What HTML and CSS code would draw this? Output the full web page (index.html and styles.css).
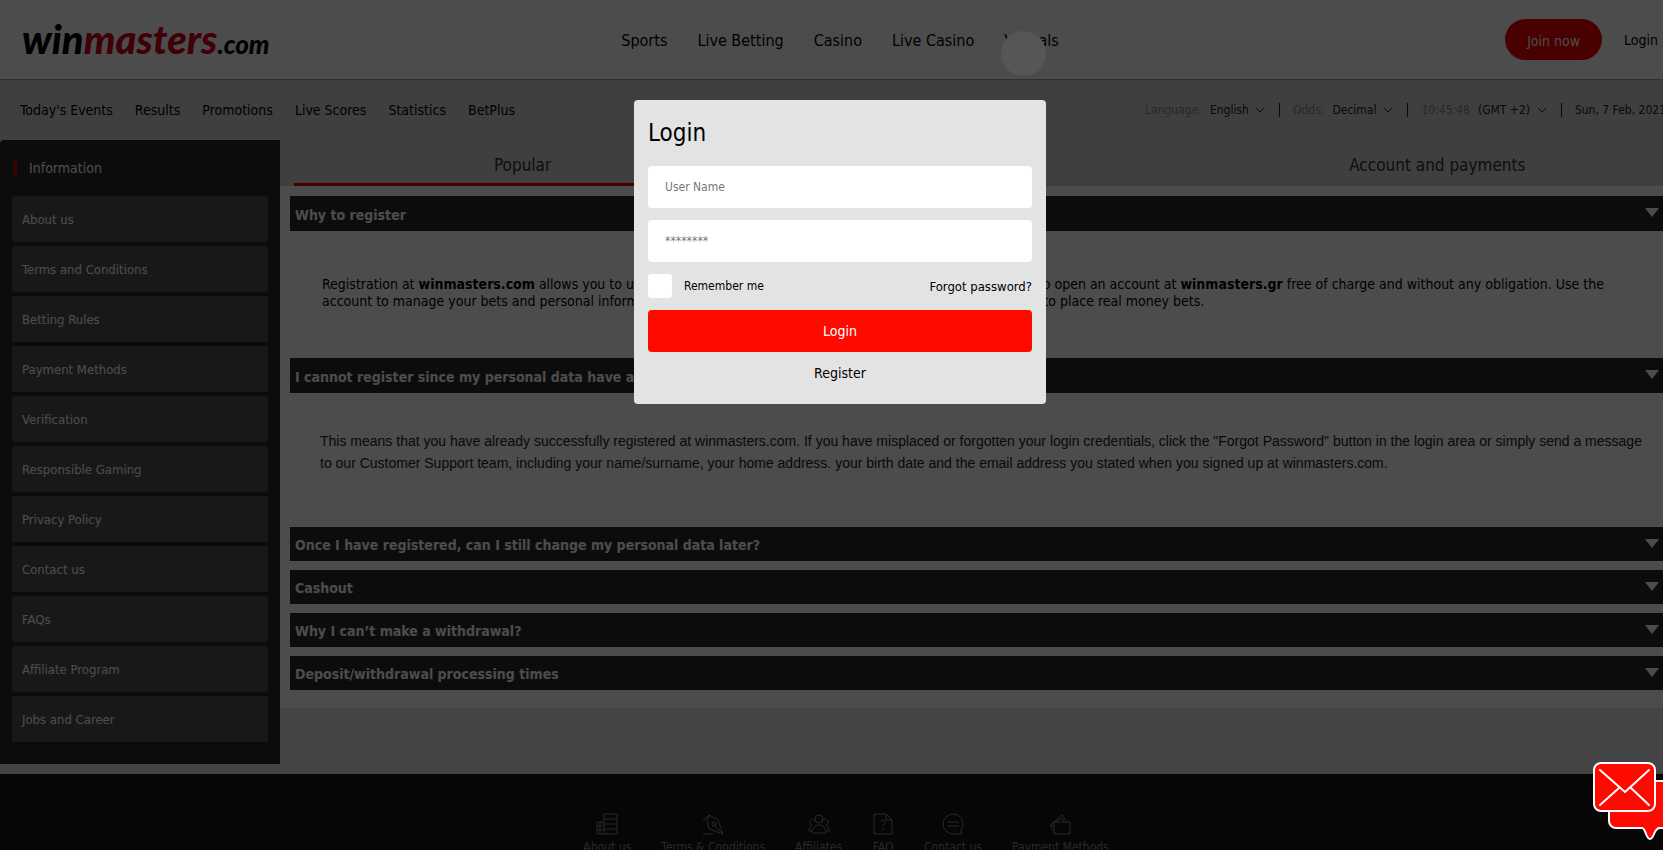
FILE: index.html
```html
<!DOCTYPE html>
<html lang="en">
<head>
  <meta charset="UTF-8" />
  <meta name="viewport" content="width=device-width, initial-scale=1" />
  <title>winmasters.com</title>
  <link rel="stylesheet" href="styles.css">
</head>
<body>
<div class="page">

  <!-- HEADER -->
  <header class="header">
    <a class="logo" href="#">win<span class="logo-red">masters</span><span class="logo-com">.com</span></a>
    <nav class="main-nav">
      <a href="#">Sports</a>
      <a href="#">Live Betting</a>
      <a href="#">Casino</a>
      <a href="#">Live Casino</a>
      <a href="#" class="virtuals">Virtuals<span class="bubble"></span></a>
    </nav>
    <div class="account">
      <button class="join-btn" type="button">Join now</button>
      <a href="#">Login</a>
    </div>
  </header>

  <!-- SUB NAVIGATION -->
  <div class="subnav">
    <nav class="sub-links">
      <a href="#">Today's Events</a>
      <a href="#">Results</a>
      <a href="#">Promotions</a>
      <a href="#">Live Scores</a>
      <a href="#">Statistics</a>
      <a href="#">BetPlus</a>
    </nav>
    <div class="settings">
      <div class="setting">
        <label for="language">Language:</label>
        <select id="language"><option>English</option></select>
        <svg class="chevron" viewBox="0 0 10 6"><path d="M1 1l4 4 4-4" /></svg>
      </div>
      <div class="setting">
        <label for="odds">Odds:</label>
        <select id="odds"><option>Decimal</option></select>
        <svg class="chevron" viewBox="0 0 10 6"><path d="M1 1l4 4 4-4" /></svg>
      </div>
      <div class="setting">
        <label for="zone">10:45:48</label>
        <select id="zone"><option>(GMT +2)</option></select>
        <svg class="chevron" viewBox="0 0 10 6"><path d="M1 1l4 4 4-4" /></svg>
      </div>
      <div class="setting">Sun, 7 Feb, 2021</div>
    </div>
  </div>

  <div class="content">
    <!-- SIDEBAR -->
    <aside class="sidebar">
      <h2>Information</h2>
      <ul>
        <li><a href="#">About us</a></li>
        <li><a href="#">Terms and Conditions</a></li>
        <li><a href="#">Betting Rules</a></li>
        <li><a href="#">Payment Methods</a></li>
        <li><a href="#">Verification</a></li>
        <li><a href="#">Responsible Gaming</a></li>
        <li><a href="#">Privacy Policy</a></li>
        <li><a href="#">Contact us</a></li>
        <li><a href="#">FAQs</a></li>
        <li><a href="#">Affiliate Program</a></li>
        <li><a href="#">Jobs and Career</a></li>
      </ul>
    </aside>

    <!-- FAQ -->
    <main class="main">
      <div class="tabs">
        <button class="tab active" type="button">Popular</button>
        <button class="tab" type="button">Account and payments</button>
      </div>
      <div class="faq">
        <button class="question" type="button">Why to register</button>
        <div class="answer">
          <p>Registration at <b>winmasters.com</b> allows you to use all of those services that we offer on our website. You may also open an account at <b>winmasters.gr</b> free of charge and without any obligation. Use the<br>account to manage your bets and personal information, to make the deposit with ease, to withdraw winnings and to place real money bets.</p>
        </div>
        <button class="question" type="button">I cannot register since my personal data have already been used</button>
        <div class="answer support">
          <p>This means that you have already successfully registered at winmasters.com. If you have misplaced or forgotten your login credentials, click the "Forgot Password" button in the login area or simply send a message to our Customer Support team, including your name/surname, your home address. your birth date and the email address you stated when you signed up at winmasters.com.</p>
        </div>
        <div class="questions">
          <button class="question" type="button">Once I have registered, can I still change my personal data later?</button>
          <button class="question" type="button">Cashout</button>
          <button class="question" type="button">Why I can’t make a withdrawal?</button>
          <button class="question" type="button">Deposit/withdrawal processing times</button>
        </div>
      </div>
    </main>
  </div>

  <!-- FOOTER -->
  <footer class="footer">
    <a href="#">
      <svg viewBox="0 0 22 22"><path d="M1 21V9h7M8 21V1h13v20zM1 21h7M8 6h13M8 11h13M8 16h13M1 13h7M1 17h7M4 9v12" /></svg>
      About us
    </a>
    <a href="#">
      <svg viewBox="0 0 22 22"><path d="M1 8l6-6 9 5 5 14L7 16 5 6M21 21l-9-9M1 21h10M7 2l-1 4" /><circle cx="12" cy="11" r="2" /></svg>
      Terms &amp; Conditions
    </a>
    <a href="#">
      <svg viewBox="0 0 22 22"><circle cx="11" cy="6" r="4" /><path d="M7 7a3 3 0 1 0-3 5M15 7a3 3 0 1 1 3 5M4 20c0-5 3-8 7-8s7 3 7 8zM4 12c-2 1-3 3-3 6h3M18 12c2 1 3 3 3 6h-3" /></svg>
      Affiliates
    </a>
    <a href="#">
      <svg viewBox="0 0 22 22"><path d="M2 1h12l6 6v14H2zM14 1v6h6M9 9c0-3 5-3 4 0 0 2-2 2-2 4M11 15v2" /></svg>
      FAQ
    </a>
    <a href="#">
      <svg viewBox="0 0 22 22"><path d="M21 11a10 10 0 1 0-10 10h9l-1-4a10 10 0 0 0 2-6zM5 9h12M5 13h12" /></svg>
      Contact us
    </a>
    <a href="#">
      <svg viewBox="0 0 22 22"><path d="M5 9h16v12H5zM5 18l-4-6L13 2l5 7M3 10l10-5 2 4M1 12l4 1" /></svg>
      Payment Methods
    </a>
  </footer>

  <!-- LOGIN POPUP -->
  <div class="overlay">
    <form class="login">
      <h1>Login</h1>
      <input class="field" type="text" placeholder="User Name" aria-label="User Name">
      <input class="field" type="password" placeholder="********" aria-label="Password">
      <div class="login-row">
        <label class="remember"><input type="checkbox"> Remember me</label>
        <a href="#">Forgot password?</a>
      </div>
      <button class="login-btn" type="button">Login</button>
      <a class="register" href="#">Register</a>
    </form>
  </div>

  <!-- CONTACT BUTTON -->
  <button class="contact-btn" type="button" aria-label="Contact">
    <svg viewBox="0 0 80 80">
      <path d="M25 20h46a7 7 0 0 1 7 7v33a7 7 0 0 1-7 7h-5q-3 1-5 6-2 5-4 5t-4-5q-2-6-4-6H23a7 7 0 0 1-7-7V28z" />
      <rect x="1" y="2" width="61" height="48" rx="7" />
      <path d="M7 9l25 22L56 9M7 44l19-17M56 44L38 27" />
    </svg>
  </button>
</div>
</body>
</html>
```
FILE: styles.css
```css
:root {
  --red: #ff0a00;
  --dark: #2b2b2b;
  --item: #525252;
  --bar: #d2d2d2;
  --popup: #e3e3e3;
}
* {
  box-sizing: border-box;
}
body {
  margin: 0;
  height: 100vh;
  overflow: hidden;
  font-family: "DejaVu Sans Condensed", "Noto Sans", sans-serif;
  font-size: 13px;
  color: #000;
}
a {
  color: inherit;
  text-decoration: none;
}
button, input, select {
  font: inherit;
  color: inherit;
  border: none;
  margin: 0;
}
button {
  cursor: pointer;
}
svg {
  display: block;
  fill: none;
}
.page {
  position: relative;
  min-width: 1680px;
  min-height: 100vh;
  overflow: hidden;
  background: #e3e3e3;
}

/* HEADER */
.header {
  display: grid;
  grid-template-columns: 1fr auto 1fr;
  align-items: center;
  height: 80px;
  padding: 0 22px;
  background: #fff;
  border-bottom: 1px solid #999;
}
.logo {
  padding-top: 4px;
  font-family: Lato, sans-serif;
  font-size: 40px;
  font-weight: 900;
  font-style: italic;
  line-height: 40px;
}
.logo-red {
  color: #d8001c;
}
.logo-com {
  font-size: 26px;
}
.main-nav {
  display: flex;
  gap: 30px;
  padding-top: 2px;
  font-size: 16px;
}
.virtuals {
  position: relative;
}
.bubble {
  position: absolute;
  z-index: 3;
  left: -3px;
  top: 0;
  width: 45px;
  height: 45px;
  border-radius: 50%;
  background: #545756;
}
.account {
  display: flex;
  justify-content: flex-end;
  align-items: center;
  gap: 22px;
  font-size: 14px;
}
.join-btn {
  height: 41px;
  padding: 2px 22px 0;
  border-radius: 21px;
  background: #f00000;
  color: #fff;
}

/* SUB NAVIGATION */
.subnav {
  display: flex;
  justify-content: space-between;
  align-items: center;
  height: 60px;
  padding: 0 14px 0 20px;
  background: var(--bar);
}
.sub-links {
  display: flex;
  gap: 22px;
  font-size: 14px;
}
.settings {
  display: flex;
  font-size: 12px;
  color: #222;
}
.setting {
  display: flex;
  align-items: center;
}
.setting + .setting {
  margin-left: 14px;
  padding-left: 13px;
  border-left: 1px solid #222;
}
.setting label {
  margin-right: 8px;
  color: #888;
}
.setting select {
  appearance: none;
  padding: 0;
  background: none;
}
.chevron {
  width: 10px;
  height: 6px;
  margin-left: 6px;
  stroke: #222;
}

/* SIDEBAR */
.content {
  display: flex;
  align-items: flex-start;
  padding-bottom: 10px;
}
.sidebar {
  flex: 0 0 280px;
  padding: 19px 12px 22px;
  border-radius: 4px 0 0;
  background: var(--dark);
  color: #fff;
}
.sidebar h2 {
  margin: 0 2px 19px;
  padding-left: 12px;
  border-left: 3px solid #d00000;
  font-size: 14px;
  font-weight: normal;
  line-height: 18px;
}
.sidebar ul {
  display: flex;
  flex-direction: column;
  gap: 4px;
  margin: 0;
  padding: 0;
  list-style: none;
}
.sidebar li a {
  display: block;
  padding: 2px 10px 0;
  border-radius: 3px;
  background: var(--item);
  line-height: 44px;
}

/* FAQ */
.main {
  flex: 1;
  background: #fff;
}
.tabs {
  display: flex;
  justify-content: space-between;
  padding: 0 14px;
  background: var(--bar);
}
.tab {
  flex: 0 0 33.33%;
  height: 46px;
  padding: 6px 0 0;
  border-bottom: 3px solid transparent;
  background: none;
  font-size: 17px;
  color: #333;
}
.tab.active {
  border-color: #e00000;
}
.faq {
  padding: 10px 0 18px 10px;
}
.question {
  display: flex;
  justify-content: space-between;
  align-items: center;
  width: 100%;
  height: 35px;
  padding: 2px 21px 0 5px;
  background: var(--dark);
  color: #fff;
  font-size: 14px;
  font-weight: bold;
  text-align: left;
}
.question::after {
  content: "";
  margin-bottom: 4px;
  border: 7px solid transparent;
  border-top: 9px solid #fff;
  border-bottom: 0;
}
.answer {
  min-height: 127px;
  padding: 45px 32px;
  font-size: 14px;
  line-height: 17px;
}
.answer p {
  margin: 0;
}
.support {
  min-height: 134px;
  padding: 37px 30px;
  font-family: "Liberation Sans", sans-serif;
  line-height: 22px;
  color: #222;
}
.questions {
  display: flex;
  flex-direction: column;
  gap: 9px;
}
.questions .question {
  height: 34px;
}

/* FOOTER */
.footer {
  display: flex;
  justify-content: center;
  gap: 30px;
  padding: 39px 0 60px 12px;
  background: #141414;
  color: #888;
  font-size: 12px;
}
.footer a {
  display: flex;
  flex-direction: column;
  align-items: center;
  gap: 5px;
}
.footer svg {
  width: 22px;
  height: 22px;
  stroke: #888;
}

/* LOGIN POPUP */
.overlay {
  position: absolute;
  inset: 0;
  z-index: 2;
  padding-top: 100px;
  background: rgba(0,0,0,0.7);
}
.login {
  display: flex;
  flex-direction: column;
  gap: 12px;
  width: 412px;
  margin: 0 auto;
  padding: 14px 14px 22px;
  border-radius: 4px;
  background: var(--popup);
}
.login h1 {
  margin: 0;
  padding-bottom: 2px;
  font-size: 24px;
  font-weight: normal;
  line-height: 38px;
}
.field {
  height: 42px;
  padding: 0 17px;
  border-radius: 4px;
  background: #fff;
  font-size: 12px;
}
.field::placeholder {
  color: #777;
}
.login-row, .remember {
  display: flex;
  align-items: center;
}
.login-row {
  justify-content: space-between;
}
.remember {
  gap: 12px;
  font-size: 12px;
}
.remember input {
  appearance: none;
  width: 24px;
  height: 24px;
  border-radius: 3px;
  background: #fff;
}
.login-btn {
  height: 42px;
  border-radius: 4px;
  background: var(--red);
  color: #fff;
  font-size: 14px;
}
.register {
  align-self: center;
  font-size: 14px;
  line-height: 18px;
}

/* CONTACT BUTTON */
.contact-btn {
  position: absolute;
  right: 7px;
  top: 761px;
  z-index: 3;
  padding: 0;
  background: none;
}
.contact-btn svg {
  width: 80px;
  height: 80px;
  fill: var(--red);
  stroke: #fff;
  stroke-width: 2;
  stroke-linejoin: round;
  stroke-linecap: round;
}
.contact-btn path:last-child {
  fill: none;
}
```
